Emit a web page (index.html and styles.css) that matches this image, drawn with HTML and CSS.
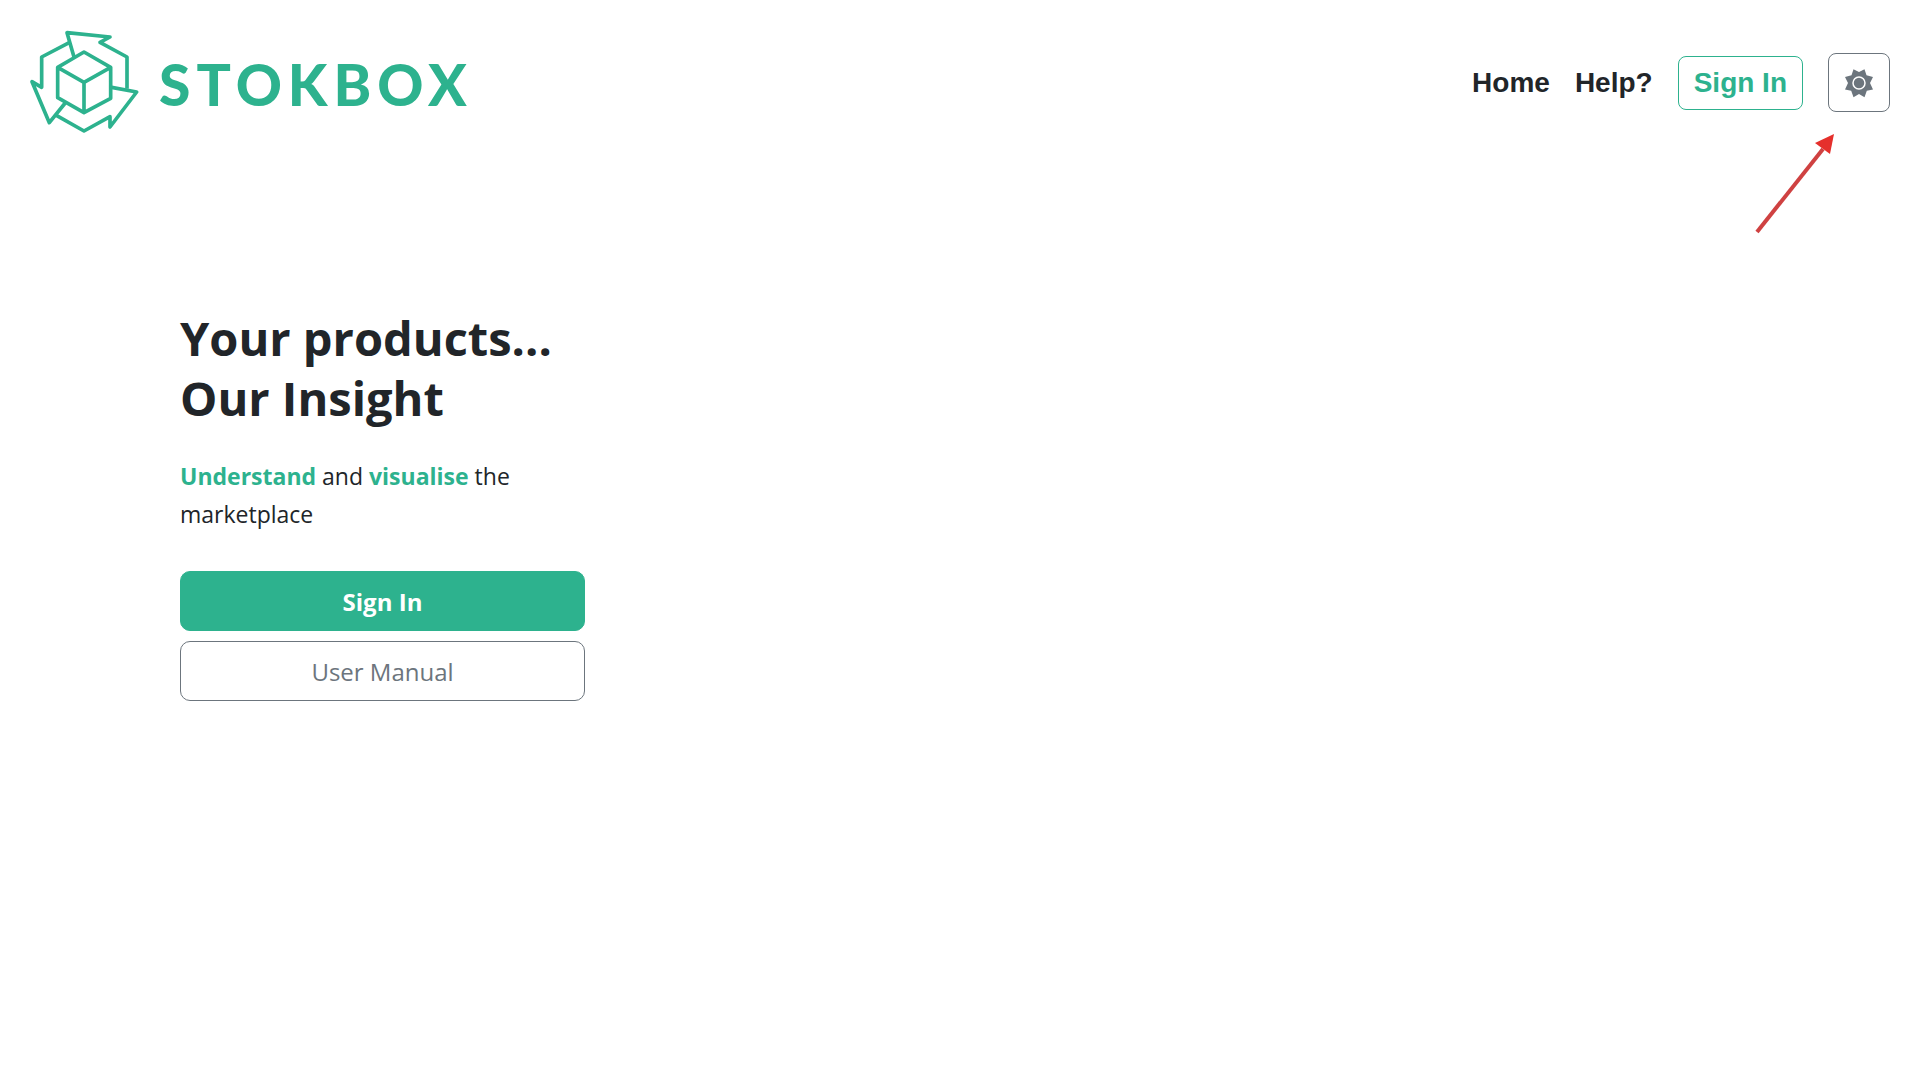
FILE: index.html
```html
<!DOCTYPE html>
<html lang="en">
<head>
<meta charset="utf-8">
<meta name="viewport" content="width=device-width, initial-scale=1">
<title>Stokbox</title>
<link rel="stylesheet" href="styles.css">
</head>
<body>
<header class="site-header">
  <a class="brand" href="#">
    <svg class="brand-mark" viewBox="0 0 390 375" aria-hidden="true">
      <path d="M162 111 141 38 270 51 240 67 321 111V206"/>
      <path d="M149 67 65 111V202L36 185 88 308 138 246"/>
      <path d="M275 202 350 216 270 321V290L192 333 109 286"/>
      <path d="M192 96 272 142V235L192 278 113 233V142ZM113 142 192 187 272 142M192 187V278"/>
    </svg>
    <span class="brand-name">STOKBOX</span>
  </a>
  <nav class="site-nav">
    <a class="nav-link" href="#">Home</a>
    <a class="nav-link" href="#">Help?</a>
    <button class="btn btn-nav" type="button">Sign In</button>
    <button class="btn btn-theme" type="button" aria-label="Toggle theme">
      <svg class="sun" viewBox="0 0 30 30" aria-hidden="true">
        <path class="sun-rays" d="M15 4 20.500 1.200 22.500 7.200 29 9 26 15 29 21.500 22.800 22.800 20.500 29.200 15 26 9.500 29.200 7.200 22.800 1 21.500 4 15 1 9 7.500 7.200 9.500 1.200Z"/>
        <circle class="sun-ring" cx="15" cy="15" r="6"/>
      </svg>
    </button>
  </nav>
  <svg class="pointer" viewBox="0 0 80 100" aria-hidden="true">
    <path class="pointer-line" d="M2 98 68 15"/>
    <path class="pointer-head" d="M79 0 60 9 75 20Z"/>
  </svg>
</header>
<main class="hero">
  <h1 class="hero-title">Your products...<br>Our Insight</h1>
  <p class="hero-text"><strong>Understand</strong> and <strong>visualise</strong> the marketplace</p>
  <div class="hero-actions">
    <button class="btn btn-primary" type="button">Sign In</button>
    <button class="btn btn-secondary" type="button">User Manual</button>
  </div>
</main>
</body>
</html>
```
FILE: styles.css
```css
* { box-sizing: border-box; }

body {
  margin: 0;
  background: #fff;
  color: #212529;
  font-family: "Open Sans", sans-serif;
  font-size: 24px;
}

.site-header {
  position: relative;
  display: flex;
  align-items: center;
  justify-content: space-between;
  padding: 20px 30px 20px 20px;
}

.brand {
  display: flex;
  align-items: center;
  gap: 9px;
  color: #2db28e;
  text-decoration: none;
}

.brand-mark {
  width: 130px;
  height: 125px;
  fill: none;
  stroke: currentColor;
  stroke-width: 11;
  stroke-linejoin: round;
}

.brand-name {
  padding-top: 2px;
  font: 900 57px/60px Lato, sans-serif;
  letter-spacing: 6px;
}

.site-nav {
  display: flex;
  align-items: center;
  gap: 25px;
  font: bold 28px/42px "Liberation Sans", Arial, sans-serif;
}

.nav-link {
  color: #212529;
  text-decoration: none;
}

.btn {
  padding: 0;
  border: 1px solid #6c757d;
  border-radius: 8px;
  background: transparent;
  color: #6c757d;
  font: inherit;
  cursor: pointer;
}

.btn-nav {
  padding: 5px 15px;
  border-color: #2db28e;
  color: #2db28e;
}

.btn-theme {
  display: flex;
  align-items: center;
  justify-content: center;
  width: 62px;
  height: 59px;
}

.sun { width: 30px; height: 30px; }
.sun-rays { fill: #6c757d; }
.sun-ring { fill: none; stroke: #fff; stroke-width: 1.5; }

.pointer {
  position: absolute;
  top: 134px;
  right: 85px;
  width: 80px;
  height: 100px;
}

.pointer-line { fill: none; stroke: #cf4141; stroke-width: 4; }
.pointer-head { fill: #e5302c; }

.hero {
  max-width: 585px;
  margin-top: 143px;
  padding-left: 180px;
}

.hero-title {
  margin: 0 0 29px;
  font-size: 47px;
  line-height: 60px;
}

.hero-text {
  margin: 0 0 38px;
  font-size: 23px;
  line-height: 38px;
}

.hero-text strong { color: #2db28e; }

.hero-actions {
  display: grid;
  gap: 10px;
}

.btn-primary,
.btn-secondary {
  height: 60px;
  border-radius: 10px;
}

.btn-primary {
  border-color: #2db28e;
  background: #2db28e;
  color: #fff;
  font-weight: 700;
}

.btn-secondary { font-weight: 500; }
```
